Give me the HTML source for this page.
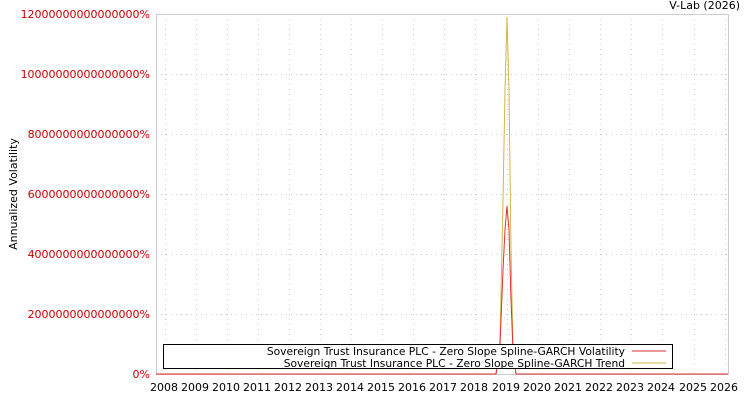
<!DOCTYPE html>
<html><head><style>
body{margin:0;width:750px;height:400px;background:#fff;overflow:hidden;font-family:"DejaVu Sans","Liberation Sans",sans-serif;}
</style></head><body>
<svg width="750" height="400" xmlns="http://www.w3.org/2000/svg" font-family="DejaVu Sans, Liberation Sans, sans-serif" font-size="11">
<rect x="156.5" y="14.5" width="572" height="360" fill="#fff" stroke="#ccc"/>
<g stroke="#ccc" stroke-dasharray="1,4">
<line x1="156" y1="74.5" x2="728" y2="74.5"/><line x1="156" y1="134.5" x2="728" y2="134.5"/><line x1="156" y1="194.5" x2="728" y2="194.5"/><line x1="156" y1="254.5" x2="728" y2="254.5"/><line x1="156" y1="314.5" x2="728" y2="314.5"/>
<line x1="165.5" y1="14" x2="165.5" y2="374"/><line x1="196.5" y1="14" x2="196.5" y2="374"/><line x1="227.5" y1="14" x2="227.5" y2="374"/><line x1="258.5" y1="14" x2="258.5" y2="374"/><line x1="289.5" y1="14" x2="289.5" y2="374"/><line x1="320.5" y1="14" x2="320.5" y2="374"/><line x1="351.5" y1="14" x2="351.5" y2="374"/><line x1="382.5" y1="14" x2="382.5" y2="374"/><line x1="413.5" y1="14" x2="413.5" y2="374"/><line x1="444.5" y1="14" x2="444.5" y2="374"/><line x1="475.5" y1="14" x2="475.5" y2="374"/><line x1="507.5" y1="14" x2="507.5" y2="374"/><line x1="538.5" y1="14" x2="538.5" y2="374"/><line x1="569.5" y1="14" x2="569.5" y2="374"/><line x1="600.5" y1="14" x2="600.5" y2="374"/><line x1="631.5" y1="14" x2="631.5" y2="374"/><line x1="662.5" y1="14" x2="662.5" y2="374"/><line x1="694.5" y1="14" x2="694.5" y2="374"/><line x1="725.5" y1="14" x2="725.5" y2="374"/>
</g>
<polyline fill="none" stroke="#d4b44a" stroke-width="1" points="156,374 496,374 500,340 503,200 505,90 507,17 509,90 511,250 513,350 516,374 728,374"/>
<polyline fill="none" stroke="#e03030" stroke-width="1" points="156,374 496,374 500,345 503,270 505,230 507,206 509,230 511,300 513,350 516,374 728,374"/>
<line x1="160" y1="374.5" x2="222" y2="374.5" stroke="#e07070"/>
<g fill="#c00" text-anchor="end">
<text x="150" y="18">12000000000000000%</text><text x="150" y="78">10000000000000000%</text><text x="150" y="138">8000000000000000%</text><text x="150" y="198">6000000000000000%</text><text x="150" y="258">4000000000000000%</text><text x="150" y="318">2000000000000000%</text><text x="150" y="378">0%</text>
</g>
<text x="17" y="194" transform="rotate(-90 17 194)" text-anchor="middle" fill="#000">Annualized Volatility</text>
<text x="740" y="9" text-anchor="end" fill="#000">V-Lab (2026)</text>
<g fill="#000" text-anchor="middle">
<text x="164" y="391">2008</text><text x="195" y="391">2009</text><text x="226" y="391">2010</text><text x="257" y="391">2011</text><text x="288" y="391">2012</text><text x="319" y="391">2013</text><text x="350" y="391">2014</text><text x="381" y="391">2015</text><text x="412" y="391">2016</text><text x="443" y="391">2017</text><text x="474" y="391">2018</text><text x="506" y="391">2019</text><text x="537" y="391">2020</text><text x="568" y="391">2021</text><text x="599" y="391">2022</text><text x="630" y="391">2023</text><text x="661" y="391">2024</text><text x="693" y="391">2025</text><text x="724" y="391">2026</text>
</g>
<rect x="163.5" y="344.5" width="509" height="24" fill="#fff" stroke="#000"/>
<g fill="#000" text-anchor="end" font-size="10.7">
<text x="625" y="355">Sovereign Trust Insurance PLC - Zero Slope Spline-GARCH Volatility</text>
<text x="625" y="367">Sovereign Trust Insurance PLC - Zero Slope Spline-GARCH Trend</text>
</g>
<line x1="632" y1="351" x2="666" y2="351" stroke="#e03030"/>
<line x1="632" y1="363" x2="666" y2="363" stroke="#d4b44a"/>
</svg>
</body></html>
